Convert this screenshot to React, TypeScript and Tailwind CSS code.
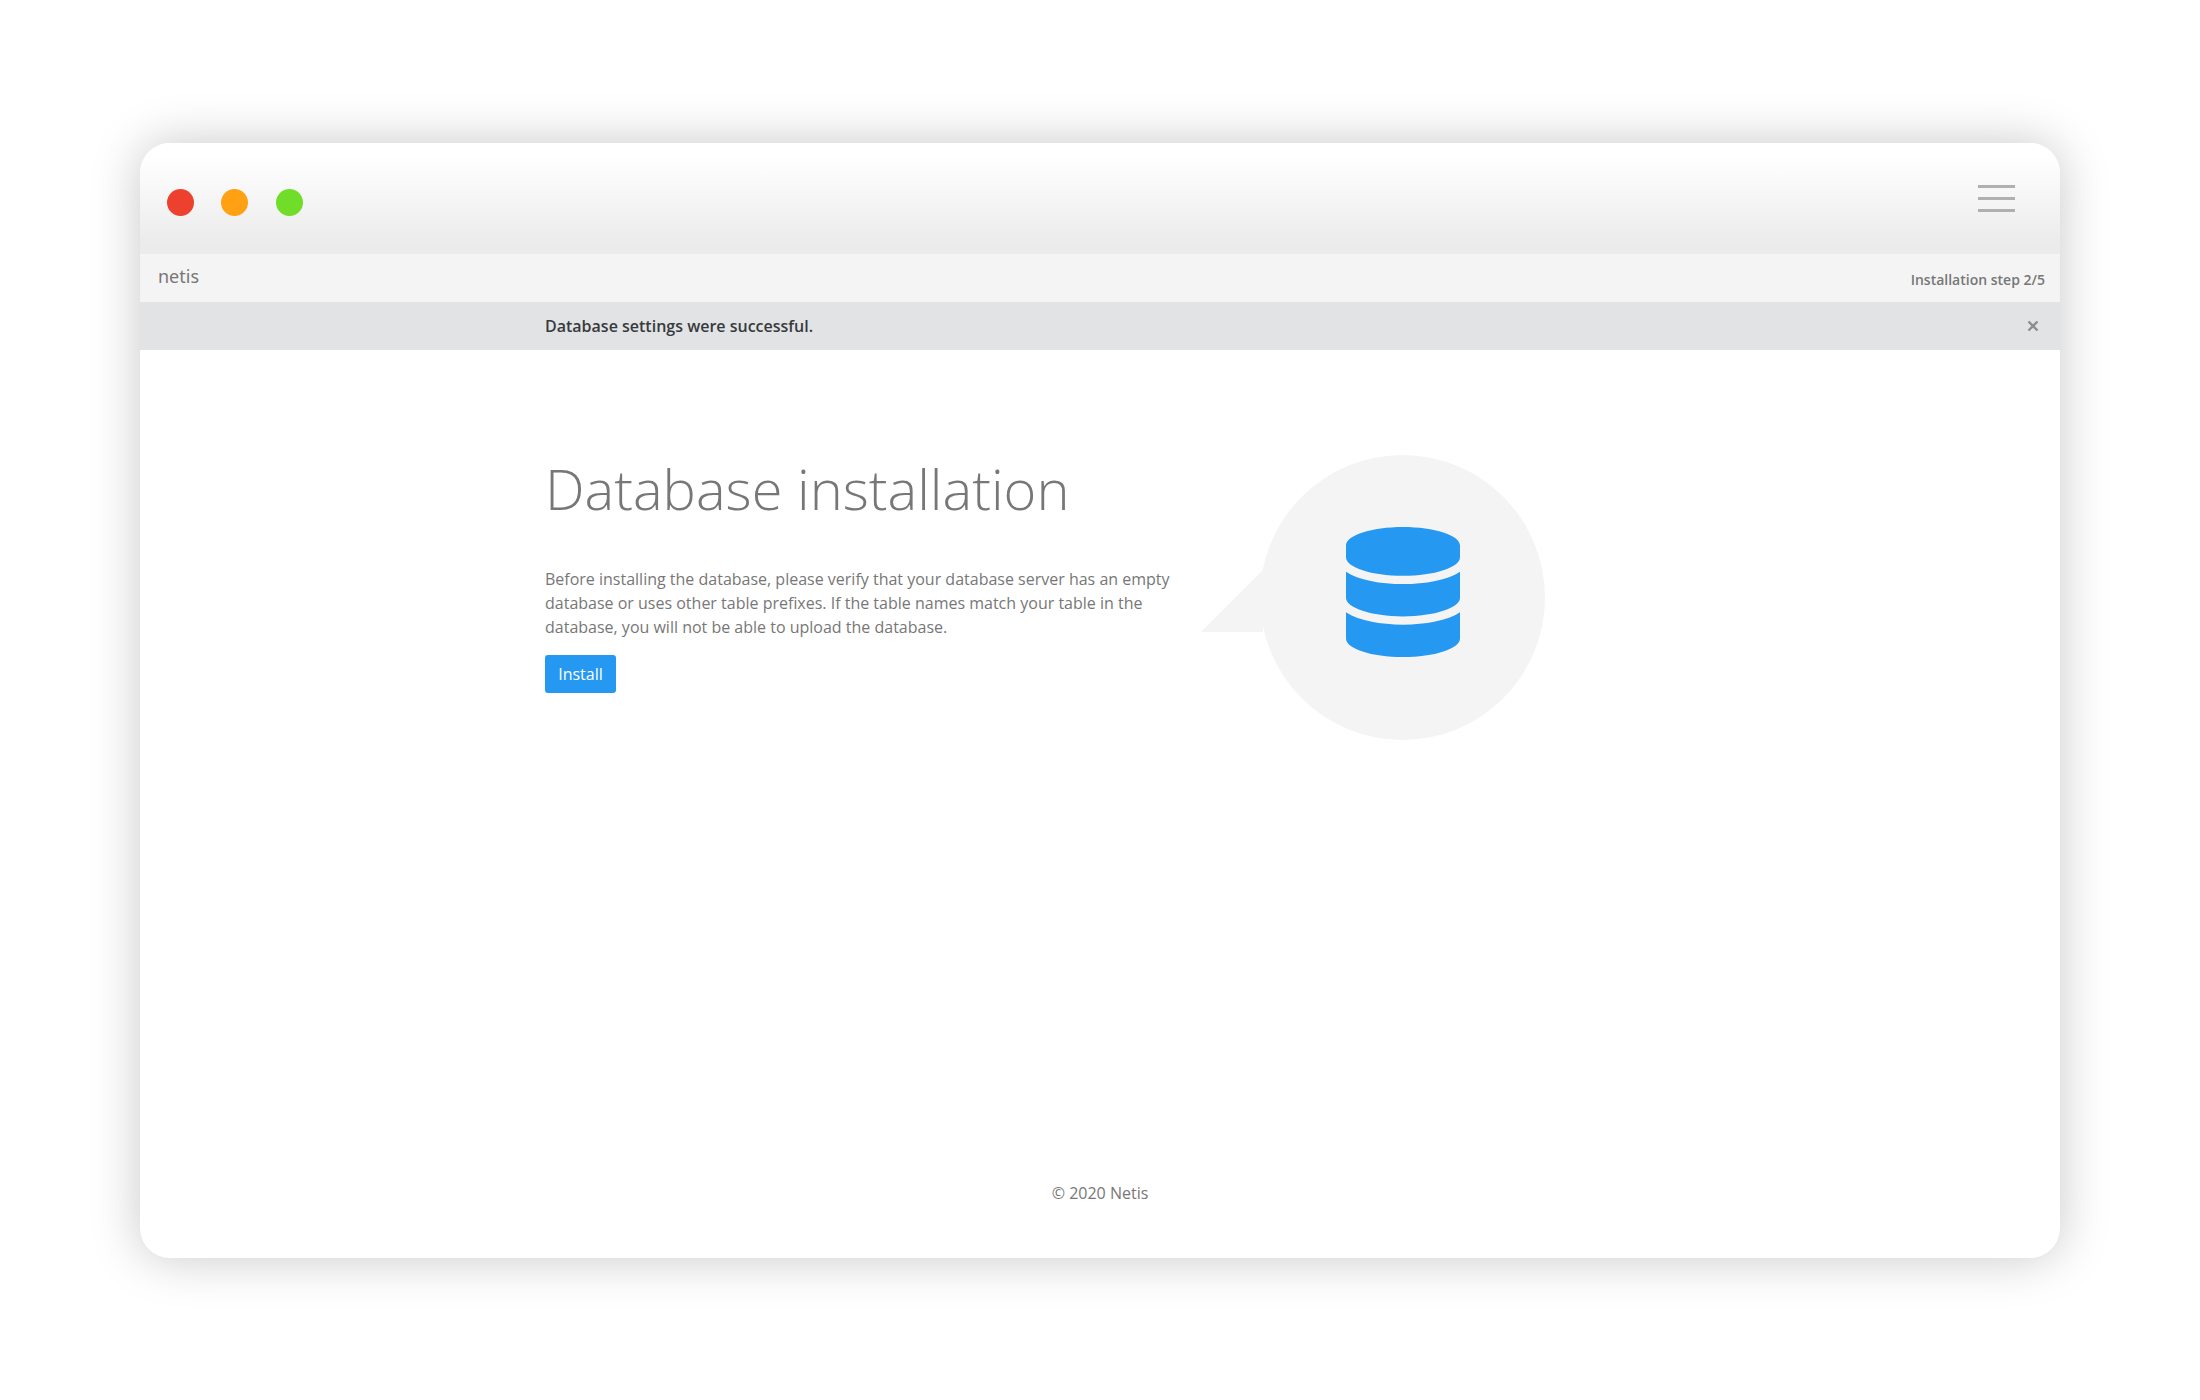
const DatabaseIcon = () => (
  <svg className="h-[130px] w-[114px] fill-[#2599f2]" viewBox="0 0 448 512" preserveAspectRatio="none">
    <path d="M448 73.143v45.714C448 159.143 347.667 192 224 192S0 159.143 0 118.857V73.143C0 32.857 100.333 0 224 0s224 32.857 224 73.143zM448 176v102.857C448 319.143 347.667 352 224 352S0 319.143 0 278.857V176c48.125 33.143 136.208 48.572 224 48.572S399.874 209.143 448 176zm0 160v102.857C448 479.143 347.667 512 224 512S0 479.143 0 438.857V336c48.125 33.143 136.208 48.572 224 48.572S399.874 369.143 448 336z" />
  </svg>
);

const TitleBar = () => (
  <header className="flex h-[111px] items-start justify-between bg-linear-to-b from-white from-12% to-[#ebebeb] to-92% pr-[45px] pl-[27px]">
    <div className="mt-[46.3px] flex gap-[27.7px]">
      <span className="size-[26.8px] rounded-full bg-[#ed402e]" />
      <span className="size-[26.8px] rounded-full bg-[#ffa112]" />
      <span className="size-[26.8px] rounded-full bg-[#70de29]" />
    </div>
    <div className="mt-[42px] flex w-[37px] flex-col gap-[9px]">
      <span className="h-[3px] bg-[#b0b0b0]" />
      <span className="h-[3px] bg-[#b0b0b0]" />
      <span className="h-[3px] bg-[#b0b0b0]" />
    </div>
  </header>
);

export default function App() {
  return (
    <div className="flex h-[1400px] w-[2200px] justify-center bg-white pt-[143px] font-['Open_Sans',sans-serif] text-base leading-6 text-[#777777]">
      <div className="flex h-[1115px] w-[1920px] flex-col overflow-hidden rounded-[30px] bg-white shadow-[0_0_50px_rgba(0,0,0,0.22)]">
        <TitleBar />
        <nav className="flex h-12 items-center justify-between bg-[#f4f4f4] pr-[15px] pl-[18px]">
          <span className="mb-[5px] font-['Noto_Sans',sans-serif] text-[18px]">netis</span>
          <span className="mt-1 text-sm font-semibold">Installation step 2/5</span>
        </nav>
        <div className="flex h-12 items-center justify-between bg-[#e2e3e5] pr-[21px] pl-[405px]">
          <span className="font-semibold text-[#373a3c]">Database settings were successful.</span>
          <svg className="size-3 stroke-[#8c8d8e] stroke-[2.4]" viewBox="0 0 12 12" fill="none">
            <path d="M1.5 1.5l9 9M10.5 1.5l-9 9" />
          </svg>
        </div>
        <main className="flex flex-1 pt-[105px] pl-[405px]">
          <section className="w-[655px]">
            <h1 className="-mt-[2px] text-[56px] leading-[70px] font-light">Database installation</h1>
            <p className="mt-[44px] w-[640px]">
              Before installing the database, please verify that your database server has an empty
              database or uses other table prefixes. If the table names match your table in the
              database, you will not be able to upload the database.
            </p>
            <button className="mt-4 h-[38px] w-[71px] rounded-[3px] bg-[#2599f2] text-white">Install</button>
          </section>
          <div className="flex">
            <svg className="mt-[114px] -mr-[3px] h-[63px] w-[63px] fill-[#f4f4f4]" viewBox="0 0 63 63">
              <path d="M1 63L63 1V63z" />
            </svg>
            <div className="flex size-[285px] items-start justify-center rounded-full bg-[#f4f4f4] pt-[72px]">
              <DatabaseIcon />
            </div>
          </div>
        </main>
        <footer className="mb-[53px] text-center">© 2020 Netis</footer>
      </div>
    </div>
  );
}
